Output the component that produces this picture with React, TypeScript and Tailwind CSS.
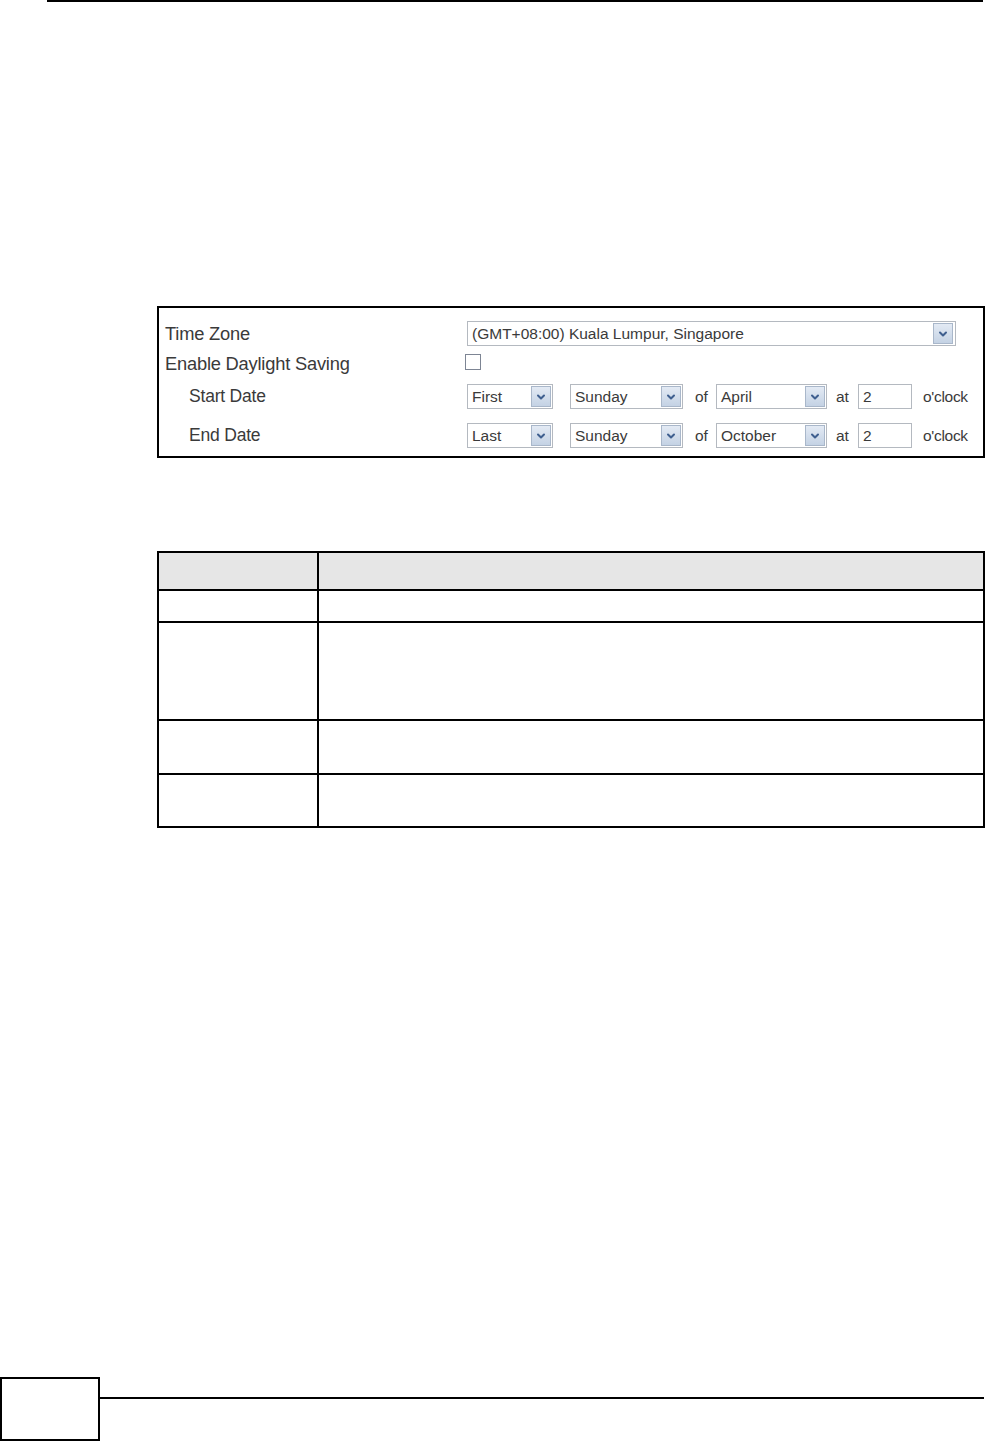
import React from "react";

function Chevron() {
  return (
    <svg width="10" height="8" viewBox="0 0 10 8">
      <path d="M2 2.5 L5 5.5 L8 2.5" fill="none" stroke="#3f5f8f" strokeWidth="2" strokeLinecap="round" strokeLinejoin="round" />
    </svg>
  );
}

function Select({ value, width }: { value: string; width: number }) {
  return (
    <div
      className="flex h-[25px] items-center justify-between border border-[#b4b9c0] bg-white pl-[4px] pr-[1px]"
      style={{ width }}
    >
      <span className="text-[15.5px] leading-none text-[#3a3a3a]">{value}</span>
      <div className="flex h-[21px] w-[20px] items-center justify-center border border-[#a9b7ca] bg-gradient-to-b from-[#e3eaf4] to-[#c4d2e4]">
        <Chevron />
      </div>
    </div>
  );
}

function DateRow({ label, which, month }: { label: string; which: string; month: string }) {
  return (
    <div className="flex h-[25px] items-center">
      <div className="w-[302px] pl-[24px] text-[17.5px] tracking-[-0.2px] text-[#3a3a3a]">{label}</div>
      <Select value={which} width={86} />
      <div className="ml-[17px]">
        <Select value="Sunday" width={113} />
      </div>
      <span className="ml-[12px] w-[21px] text-[15.5px] text-[#3a3a3a]">of</span>
      <Select value={month} width={111} />
      <span className="ml-[9px] w-[22px] text-[15.5px] text-[#3a3a3a]">at</span>
      <div className="flex h-[25px] w-[54px] items-center border border-[#b4b9c0] bg-white pl-[4px] text-[15.5px] text-[#3a3a3a]">
        2
      </div>
      <span className="ml-[11px] text-[15.5px] tracking-[-0.3px] text-[#3a3a3a]">o'clock</span>
    </div>
  );
}

export default function App() {
  const rows = [
    { h: 38, bg: true },
    { h: 32 },
    { h: 98 },
    { h: 54 },
    { h: 51 },
  ];
  return (
    <div
      className="relative h-[1442px] w-[986px] bg-white"
      style={{ fontFamily: '"Liberation Sans", Arial, sans-serif' }}
    >
      {/* top rule */}
      <div className="ml-[47px] h-[2px] w-[936px] bg-black" />

      {/* screenshot figure */}
      <div className="ml-[157px] mt-[304px] h-[152px] w-[828px] border-2 border-black">
        <div className="flex flex-col pl-[6px] pt-[13px]">
          <div className="flex h-[25px] items-center">
            <div className="w-[302px] text-[18.3px] tracking-[-0.2px] text-[#3a3a3a]">Time Zone</div>
            <div className="flex h-[25px] w-[489px] items-center justify-between border border-[#b4b9c0] bg-white pl-[4px] pr-[2px]">
              <span className="text-[15.5px] leading-none text-[#3a3a3a]">(GMT+08:00) Kuala Lumpur, Singapore</span>
              <div className="flex h-[21px] w-[20px] items-center justify-center border border-[#a9b7ca] bg-gradient-to-b from-[#e3eaf4] to-[#c4d2e4]">
                <Chevron />
              </div>
            </div>
          </div>
          <div className="flex h-[32px] items-center">
            <div className="w-[300px] pt-[3px] text-[18.3px] tracking-[-0.2px] text-[#3a3a3a]">Enable Daylight Saving</div>
            <div className="h-[16px] w-[16px] border border-[#7d8594] bg-white" />
          </div>
          <div className="mt-[6px]">
            <DateRow label="Start Date" which="First" month="April" />
          </div>
          <div className="mt-[14px]">
            <DateRow label="End Date" which="Last" month="October" />
          </div>
        </div>
      </div>

      {/* table */}
      <div className="ml-[157px] mt-[93px] w-[828px] border-2 border-black">
        {rows.map((r, i) => (
          <div
            key={i}
            className={
              "flex " +
              (i < rows.length - 1 ? "border-b-2 border-black " : "") +
              (r.bg ? "bg-[#e6e6e6]" : "bg-white")
            }
            style={{ height: r.h }}
          >
            <div className="w-[160px] border-r-2 border-black" />
            <div className="flex-1" />
          </div>
        ))}
      </div>

      {/* footer */}
      <div className="absolute left-0 top-[1377px] flex w-[986px] items-start">
        <div className="h-[64px] w-[100px] border-2 border-black" />
        <div className="mt-[20px] h-[1.5px] w-[884px] bg-black" />
      </div>
    </div>
  );
}
